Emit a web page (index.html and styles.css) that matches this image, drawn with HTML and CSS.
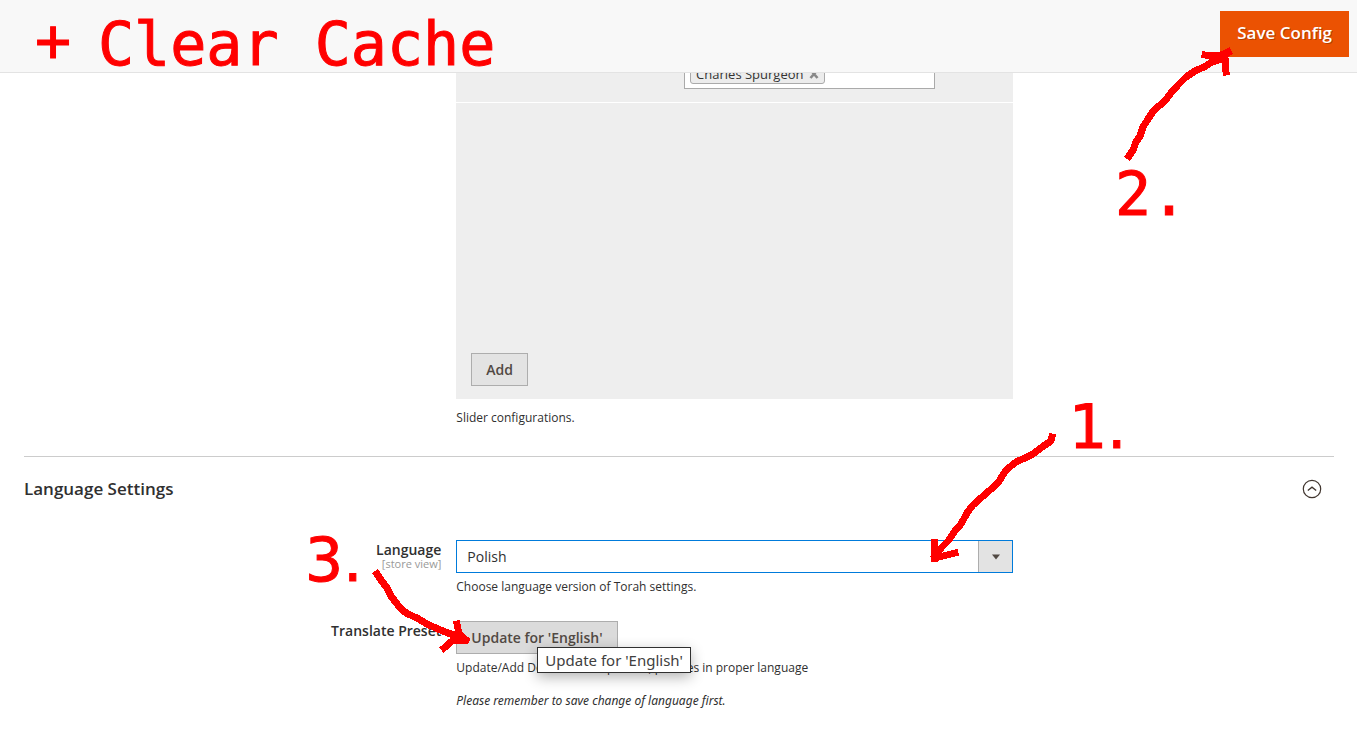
FILE: index.html
```
<!DOCTYPE html>
<html lang="en">
<head>
<meta charset="utf-8">
<title>Configuration</title>
<link rel="stylesheet" href="styles.css">
</head>
<body>
<header class="page-actions">
  <button class="btn-primary" type="button">Save Config</button>
</header>
<main class="content">
  <section class="section">
    <div class="field">
      <div class="control">
        <div class="sliders">
          <div class="slider-row">
            <div class="multiselect">
              <span class="chip">Charles Spurgeon
                <button class="chip-remove" type="button" aria-label="Remove Charles Spurgeon"><svg width="10" height="10" viewBox="0 0 10 10"><path d="M1.5 1L8.5 9M8.5 1L1.5 9" stroke="#888" stroke-width="2.6"/></svg></button>
              </span>
            </div>
          </div>
          <div class="slider-foot"><button class="btn" type="button">Add</button></div>
        </div>
        <p class="note">Slider configurations.</p>
      </div>
    </div>
  </section>
  <section class="section section-language">
    <div class="section-head">
      <h2 class="section-title">Language Settings</h2>
      <button class="toggle" type="button" aria-label="Collapse Language Settings"><svg width="20" height="20" viewBox="0 0 20 20" fill="none" stroke="#41362f"><circle cx="10" cy="10" r="8.7" stroke-width="1.2"/><path d="M5.8 11.6L10 8.2L14.2 11.6" stroke-width="1.3"/></svg></button>
    </div>
    <div class="field">
      <label class="label" for="language">Language<span class="scope">[store view]</span></label>
      <div class="control">
        <div class="select">
          <select id="language"><option>Polish</option><option>English</option></select>
          <span class="select-arrow"><svg width="8" height="6" viewBox="0 0 8 6"><path d="M0 0.5H8L4 5.5Z" fill="#514943"/></svg></span>
        </div>
        <p class="note">Choose language version of Torah settings.</p>
      </div>
    </div>
    <div class="field">
      <label class="label" for="preset">Translate Preset</label>
      <div class="control">
        <div class="tooltip-anchor">
          <button class="btn btn-hover" id="preset" type="button" aria-describedby="tip">Update for 'English'</button>
          <span class="tooltip" id="tip" role="tooltip">Update for 'English'</span>
        </div>
        <p class="note">Update/Add Default Torah presets, phrases in proper language</p>
        <p class="note note-reminder">Please remember to save change of language first.</p>
      </div>
    </div>
  </section>
</main>
<div class="marks">
  <span class="mark mark-plus">+</span>
  <span class="mark mark-cache">Clear Cache</span>
  <span class="mark mark-narrow mark-one">1.</span>
  <span class="mark mark-two">2.</span>
  <span class="mark mark-narrow mark-three">3.</span>
  <svg class="arrows" width="1357" height="745" viewBox="0 0 1357 745" fill="none" stroke="#f00" stroke-width="7" stroke-linecap="square" stroke-linejoin="round" shape-rendering="crispEdges">
    <path d="M1129 156L1133 150L1136 142L1140 136L1143 127L1148 119L1154 110L1165 101L1170 94L1178 85L1186 77L1195 71L1204 67L1212 62L1221 59L1228 53M1205 55L1219 56L1228 52M1225 58L1226 72"/>
    <path d="M1052 437L1051 441L1042 447L1033 454L1025 458L1016 462L1006 470L1001 478L998 483L990 490L982 497L973 505L967 513L961 524L954 532L949 540L942 547L935 556M934 542L934 558M935 558L943 556L955 553"/>
    <path d="M377 574L381 580L387 588L391 596L397 604L402 610L408 614L417 618L427 624L438 629L448 633L457 636L466 640M457 624L459 634L466 640L452 641L444 648"/>
  </svg>
</div>
</body>
</html>
```
FILE: styles.css
```
* { box-sizing: border-box; }
body {
  margin: 0;
  position: relative;
  overflow: hidden;
  background: #fff;
  color: #303030;
  font: 14px/20px "Open Sans", "Noto Sans", sans-serif;
}
button, select { font: inherit; color: inherit; cursor: pointer; }
.page-actions {
  position: sticky;
  top: 0;
  z-index: 2;
  display: flex;
  justify-content: flex-end;
  padding: 11px 8px 15px;
  background: #f8f8f8;
  border-bottom: 1px solid #e3e3e3;
}
.btn-primary {
  padding: 11px 17px 13px;
  border: 0;
  background: #eb5202;
  color: #fff;
  font-size: 17px;
  font-weight: 600;
  line-height: 22px;
  text-shadow: 1px 1px 0 rgba(0, 0, 0, 0.25);
}
.content { margin-top: -24px; padding: 0 23px 0 24px; }
.field { display: grid; grid-template-columns: 33% 42.5%; }
.control { grid-column: 2; }
.sliders { background: #eee; }
.slider-row {
  display: flex;
  justify-content: flex-end;
  padding: 5px 14% 13px 0;
  border-bottom: 1px solid #fff;
}
.multiselect {
  width: 251px;
  padding: 4px 5px;
  border: 1px solid #aaa;
  background: #fff;
  display: flex;
  height: 35px;
  align-items: flex-end;
}
.chip {
  display: flex;
  align-items: center;
  gap: 6px;
  padding: 1px 5px 0;
  border: 1px solid #aaa;
  border-radius: 3px;
  background: #ececec;
  font-size: 13px;
  line-height: 18px;
  color: #333;
}
.chip-remove { display: flex; padding: 0; border: 0; background: none; }
.slider-foot {
  display: flex;
  align-items: flex-end;
  min-height: 296px;
  padding: 13px 15px;
}
.btn {
  padding: 6px 14px 5px;
  border: 1px solid #adadad;
  background: #e3e3e3;
  color: #514943;
  font-weight: 600;
}
.btn-hover { background: #dbdbdb; }
.note { margin: 6px 0 0; font-size: 12px; line-height: 16px; }
.sliders + .note { margin-top: 11px; }
.note-reminder { margin-top: 17px; font-family: "Noto Sans", sans-serif; font-style: italic; }
.section-language { margin-top: 30px; border-top: 1px solid #ccc; }
.section-head {
  display: flex;
  align-items: center;
  justify-content: space-between;
  padding: 20px 12px 40px 0;
}
.section-title { margin: 0; font-size: 17px; font-weight: 600; line-height: 23px; }
.toggle { display: flex; padding: 0; border: 0; background: none; }
.label { padding-right: 15px; text-align: right; font-weight: 600; }
.scope { display: block; color: #999; font-size: 11px; font-weight: 400; line-height: 8px; }
.section-language .field + .field { margin-top: 26px; }
.select { position: relative; display: grid; }
.select select {
  appearance: none;
  padding: 6px 44px 5px 10px;
  border: 1px solid #007bdb;
  border-radius: 0;
  background: #fff;
}
.select-arrow {
  position: absolute;
  inset: 1px 1px 1px auto;
  width: 34px;
  display: grid;
  place-items: center;
  border-left: 1px solid #adadad;
  background: #e3e3e3;
  pointer-events: none;
}
.tooltip-anchor { position: relative; display: flex; }
.tooltip {
  position: absolute;
  left: 81px;
  top: 26px;
  padding: 2px 7px;
  border: 1px solid #303030;
  background: #fff;
  box-shadow: 0 4px 14px rgba(0, 0, 0, 0.3);
  color: #404040;
  font-size: 15px;
  font-family: "Noto Sans", sans-serif;
  white-space: nowrap;
}
.marks { position: absolute; inset: 0; z-index: 3; pointer-events: none; }
.arrows { position: absolute; left: 0; top: 0; }
.mark {
  position: absolute;
  color: #f00;
  font: 60px/60px "DejaVu Sans Mono", monospace;
  -webkit-text-stroke: 1px #f00;
  white-space: pre;
}
.mark-narrow { font-family: "DejaVu Sans", sans-serif; }
.mark-plus { left: 35px; top: 10px; }
.mark-cache { left: 98px; top: 14px; }
.mark-one { left: 1069px; top: 397px; }
.mark-two { left: 1115px; top: 164px; }
.mark-three { left: 305px; top: 530px; }
```
